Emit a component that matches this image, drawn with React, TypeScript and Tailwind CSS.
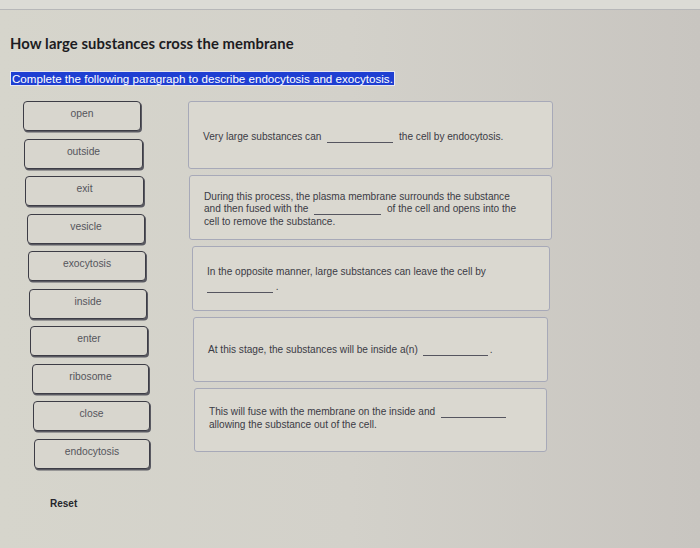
import React from 'react';

const words = [
  { label: 'open', cls: 'ml-[23px] w-[118px]' },
  { label: 'outside', cls: 'ml-[24px] w-[119px]' },
  { label: 'exit', cls: 'ml-[25px] w-[119px]' },
  { label: 'vesicle', cls: 'ml-[27px] w-[118px]' },
  { label: 'exocytosis', cls: 'ml-[28px] w-[118px]' },
  { label: 'inside', cls: 'ml-[29px] w-[118px]' },
  { label: 'enter', cls: 'ml-[30px] w-[118px]' },
  { label: 'ribosome', cls: 'ml-[32px] w-[117px]' },
  { label: 'close', cls: 'ml-[33px] w-[117px]' },
  { label: 'endocytosis', cls: 'ml-[34px] w-[116px]' },
];

function Blank({ className = 'w-[66px]' }: { className?: string }) {
  return <span className={`inline-block border-b border-[#55555f] align-baseline translate-y-[-1px] ${className}`}>&nbsp;</span>;
}

function Box({ cls, children }: { cls: string; children: React.ReactNode }) {
  return (
    <div className={`flex items-center rounded-[3px] border-[1.5px] border-[#a7a9b8] bg-[#dad8d0] pl-[14px] pr-3 text-[10.1px] leading-[12px] text-[#3b3b45] ${cls}`}>
      <div>{children}</div>
    </div>
  );
}

export default function App() {
  return (
    <div
      className="flex h-[548px] w-[700px] flex-col overflow-hidden bg-linear-to-r from-[#d6d5cc] via-[#d3d1ca] to-[#c8c5c0]"
      style={{ fontFamily: '"Liberation Sans", Arial, sans-serif' }}
    >
      <div className="h-[10px] shrink-0 border-b border-[#b7b7b9] bg-[#dcdbd6]" />

      <div className="pl-[10px] pt-[25px]">
        <h1
          className="text-[14.8px] font-bold leading-[16px] tracking-[0.1px] text-[#1c1c22]"
          style={{ fontFamily: 'Lato, "Open Sans", sans-serif' }}
        >
          How large substances cross the membrane
        </h1>

        <div className="mt-[15px]">
          <span className="inline-block border border-[#e8e8f0] bg-[#1f3fd2] px-[1px] text-[11.6px] leading-[13px] text-white">
            Complete the following paragraph to describe endocytosis and exocytosis.
          </span>
        </div>
      </div>

      <div className="mt-[11px] flex">
        <div className="flex w-[178px] shrink-0 flex-col">
          <div className="flex flex-col gap-[7.5px]">
            {words.map((w) => (
              <div
                key={w.label}
                className={`flex h-[30px] justify-center rounded-[4px] border border-[#3d3d46] bg-[#d8d6ce] pt-[6px] text-[10.3px] leading-[12px] text-[#55555c] shadow-[1px_1.5px_0_#5a5a62] ${w.cls}`}
              >
                {w.label}
              </div>
            ))}
          </div>
          <div className="ml-[50px] mt-[27px] text-[10px] font-bold text-[#26262c]">Reset</div>
        </div>

        <div className="flex flex-col gap-[6px]">
          <Box cls="ml-[10px] w-[365px] h-[68px]">
            <div className="pt-[5px]">
              Very large substances can <Blank className="mx-[3px] w-[66px]" /> the cell by endocytosis.
            </div>
          </Box>
          <Box cls="ml-[11px] w-[363px] h-[65px]">
            <div className="pt-[4px]">
              During this process, the plasma membrane surrounds the substance
              <br />
              and then fused with the <Blank className="mx-[3px] w-[67px]" /> of the cell and opens into the
              <br />
              cell to remove the substance.
            </div>
          </Box>
          <Box cls="ml-[14px] w-[358px] h-[65px]">
            <div className="pt-[3px]">
              In the opposite manner, large substances can leave the cell by
              <br />
              <span className="mt-[3px] inline-block">
                <Blank className="w-[66px]" /> .
              </span>
            </div>
          </Box>
          <Box cls="ml-[15px] w-[355px] h-[65px]">
            <div className="pt-[2px]">
              At this stage, the substances will be inside a(n) <Blank className="mx-[2px] w-[65px]" />.
            </div>
          </Box>
          <Box cls="ml-[16px] w-[353px] h-[64px]">
            <div className="pb-[4px]">
              This will fuse with the membrane on the inside and <Blank className="ml-[3px] w-[65px]" />
              <br />
              allowing the substance out of the cell.
            </div>
          </Box>
        </div>
      </div>
    </div>
  );
}
